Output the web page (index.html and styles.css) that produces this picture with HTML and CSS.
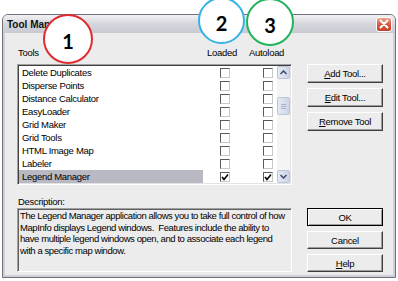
FILE: index.html
```html
<!DOCTYPE html>
<html lang="en">
<head>
  <meta charset="UTF-8">
  <title>Tool Manager</title>
  <link rel="stylesheet" href="styles.css">
</head>
<body>
  <div class="window">
    <div class="titlebar">
      <span class="title">Tool Manager</span>
      <span class="close">
        <svg width="10" height="10" viewBox="0 0 10 10"><path d="M1.5 1.5 L8.5 8.5 M8.5 1.5 L1.5 8.5" stroke="#fff" stroke-width="2" stroke-linecap="round"/></svg>
      </span>
    </div>
    <div class="frame">
      <div class="client">
        <div class="top">
          <div class="left">
            <div class="heads">
              <span class="h-tools">Tools</span>
              <span class="h-loaded">Loaded</span>
              <span class="h-auto">Autoload</span>
            </div>
            <div class="listbox">
              <div class="rows">
                <div class="row"><span class="name">Delete Duplicates</span><span class="cb"></span><span class="cb cb-auto"></span></div>
                <div class="row"><span class="name">Disperse Points</span><span class="cb"></span><span class="cb cb-auto"></span></div>
                <div class="row"><span class="name">Distance Calculator</span><span class="cb"></span><span class="cb cb-auto"></span></div>
                <div class="row"><span class="name">EasyLoader</span><span class="cb"></span><span class="cb cb-auto"></span></div>
                <div class="row"><span class="name">Grid Maker</span><span class="cb"></span><span class="cb cb-auto"></span></div>
                <div class="row"><span class="name">Grid Tools</span><span class="cb"></span><span class="cb cb-auto"></span></div>
                <div class="row"><span class="name">HTML Image Map</span><span class="cb"></span><span class="cb cb-auto"></span></div>
                <div class="row"><span class="name">Labeler</span><span class="cb"></span><span class="cb cb-auto"></span></div>
                <div class="row selected">
                  <span class="name">Legend Manager</span>
                  <span class="cb"><svg width="8" height="8" viewBox="0 0 8 8"><path d="M1 4 L3 6.5 L7 1.5" fill="none" stroke="#000" stroke-width="1.6"/></svg></span>
                  <span class="cb cb-auto"><svg width="8" height="8" viewBox="0 0 8 8"><path d="M1 4 L3 6.5 L7 1.5" fill="none" stroke="#000" stroke-width="1.6"/></svg></span>
                </div>
              </div>
              <div class="scrollbar">
                <span class="sb-btn">
                  <svg width="7" height="5" viewBox="0 0 7 5"><path d="M0.5 4 L3.5 1 L6.5 4" fill="none" stroke="#3c4a6a" stroke-width="1.5"/></svg>
                </span>
                <span class="sb-thumb">
                  <svg width="5" height="5" viewBox="0 0 5 5"><path d="M0 0.5 H5 M0 2.5 H5 M0 4.5 H5" stroke="#a9b3cc" stroke-width="1"/></svg>
                </span>
                <span class="sb-space"></span>
                <span class="sb-btn">
                  <svg width="7" height="5" viewBox="0 0 7 5"><path d="M0.5 1 L3.5 4 L6.5 1" fill="none" stroke="#3c4a6a" stroke-width="1.5"/></svg>
                </span>
              </div>
            </div>
          </div>
          <div class="buttons buttons-top">
            <button class="btn"><u>A</u>dd Tool...</button>
            <button class="btn"><u>E</u>dit Tool...</button>
            <button class="btn"><u>R</u>emove Tool</button>
          </div>
        </div>
        <div class="bottom">
          <div class="left">
            <div class="desc-label">Description:</div>
            <div class="desc">The Legend Manager application allows you to take full control of how<br>MapInfo displays Legend windows.&nbsp; Features include the ability to<br>have multiple legend windows open, and to associate each legend<br>with a specific map window.</div>
          </div>
          <div class="buttons buttons-bottom">
            <button class="btn btn-default">OK</button>
            <button class="btn">Cancel</button>
            <button class="btn"><u>H</u>elp</button>
          </div>
        </div>
      </div>
    </div>
  </div>

  <div class="badge badge-red">1</div>
  <div class="badge badge-blue">2</div>
  <div class="badge badge-green">3</div>
</body>
</html>
```

FILE: styles.css
```css
/* Tool Manager dialog */
body {
  margin: 0;
  position: relative;
  background: #fff;
  font-family: "Liberation Sans", Arial, sans-serif;
  font-size: 9.5px;
  letter-spacing: -0.3px;
  color: #000;
}

.window {
  box-sizing: border-box;
  width: 394px;
  height: 264px;
  margin: 14px 0 0 2px;
  border: 1px solid #70707c;
  border-radius: 6px 6px 0 0;
  background: #cfcfd7;
  display: flex;
  flex-direction: column;
  overflow: hidden;
}

.titlebar {
  height: 18px;
  flex: none;
  display: flex;
  align-items: center;
  justify-content: space-between;
  padding: 0 3px 0 4px;
  background: linear-gradient(#f2f2f5, #d7d7de 45%, #c9c9d2);
}

.title {
  font-weight: bold;
  font-size: 10px;
  letter-spacing: 0;
  color: #111;
}

.close {
  width: 16px;
  height: 15px;
  box-sizing: border-box;
  border: 1px solid #fff;
  border-radius: 3px;
  background: linear-gradient(#eca38d, #d5553a 55%, #c4432a);
  display: flex;
  align-items: center;
  justify-content: center;
}

.frame {
  flex: 1;
  padding: 0 2px 2px 2px;
  display: flex;
}

.client {
  flex: 1;
  background: #ececec;
  padding: 14px 0 0 12px;
}

.top,
.bottom {
  display: flex;
}

.left {
  width: 275px;
}

.heads {
  display: flex;
  height: 11px;
  line-height: 11px;
  margin-bottom: 6px;
}

.h-tools {
  width: 189px;
  padding-left: 1px;
}

.h-loaded {
  width: 42px;
}

.listbox {
  display: flex;
  background: #fff;
  border: 1px solid;
  border-color: #a0a0a0 #fff #fff #a0a0a0;
  box-shadow: inset 1px 1px #404040, inset -1px -1px #e2e2e2;
  padding: 1px;
}

.rows {
  width: 258px;
}

.row {
  height: 13px;
  display: flex;
  align-items: center;
}

.name {
  width: 181px;
  height: 13px;
  line-height: 13px;
  padding-left: 3px;
  white-space: nowrap;
}

.selected .name {
  background: #b9b9c4;
}

.cb {
  box-sizing: border-box;
  width: 10px;
  height: 10px;
  margin-left: 17px;
  background: #fff;
  border: 1px solid;
  border-color: #5a5a5a #c8c8c8 #c8c8c8 #5a5a5a;
  display: flex;
  align-items: center;
  justify-content: center;
}

.cb-auto {
  margin-left: 33px;
}

.scrollbar {
  width: 13px;
  display: flex;
  flex-direction: column;
  background: #f4f4f2;
}

.sb-btn,
.sb-thumb {
  box-sizing: border-box;
  width: 13px;
  border: 1px solid #bcc4d8;
  border-radius: 2px;
  background: linear-gradient(90deg, #e4e9f5, #cdd5e6);
  display: flex;
  align-items: center;
  justify-content: center;
}

.sb-btn {
  height: 13px;
}

.sb-thumb {
  height: 18px;
  margin-top: 18px;
}

.sb-space {
  flex: 1;
}

.buttons {
  width: 76px;
  margin-left: 15px;
  display: flex;
  flex-direction: column;
  gap: 5px;
}

.buttons-top {
  margin-top: 17px;
}

.buttons-bottom {
  margin-top: 12px;
}

.btn {
  box-sizing: border-box;
  height: 19px;
  padding: 0;
  font: inherit;
  letter-spacing: inherit;
  color: #000;
  background: #ececec;
  border: 1px solid;
  border-color: #fff #404040 #404040 #fff;
  box-shadow: inset -1px -1px #9c9c9c;
}

.buttons-bottom .btn {
  height: 18px;
}

.btn-default {
  outline: 1px solid #000;
  outline-offset: -1px;
  border-color: #000 #404040 #404040 #000;
  box-shadow: inset 1px 1px #fff, inset -1px -1px #9c9c9c;
}

.bottom {
  margin-top: 11px;
}

.desc-label {
  height: 11px;
  line-height: 11px;
  padding-left: 1px;
}

.desc {
  box-sizing: border-box;
  height: 64px;
  margin-top: 1px;
  padding: 1px 1px 0 2px;
  line-height: 11.5px;
  letter-spacing: -0.42px;
  white-space: nowrap;
  overflow: hidden;
  border: 1px solid;
  border-color: #a0a0a0 #fff #fff #a0a0a0;
  box-shadow: inset 1px 1px #606060;
}

.badge {
  position: absolute;
  box-sizing: border-box;
  border: 2px solid;
  border-radius: 50%;
  background: #fff;
  display: flex;
  align-items: center;
  justify-content: center;
  font-family: Lato, "Liberation Sans", sans-serif;
  font-weight: bold;
  font-size: 20px;
  letter-spacing: 0;
  color: #000;
}

.badge-red {
  left: 43px;
  top: 14px;
  width: 50px;
  height: 50px;
  border-color: #df2a2e;
  padding-top: 3px;
}

.badge-blue {
  left: 198px;
  top: -3px;
  width: 47px;
  height: 47px;
  border-color: #35b2e5;
  padding-top: 5px;
}

.badge-green {
  left: 246px;
  top: -2px;
  width: 48px;
  height: 48px;
  border-color: #22b35c;
  padding-top: 5px;
}
```
